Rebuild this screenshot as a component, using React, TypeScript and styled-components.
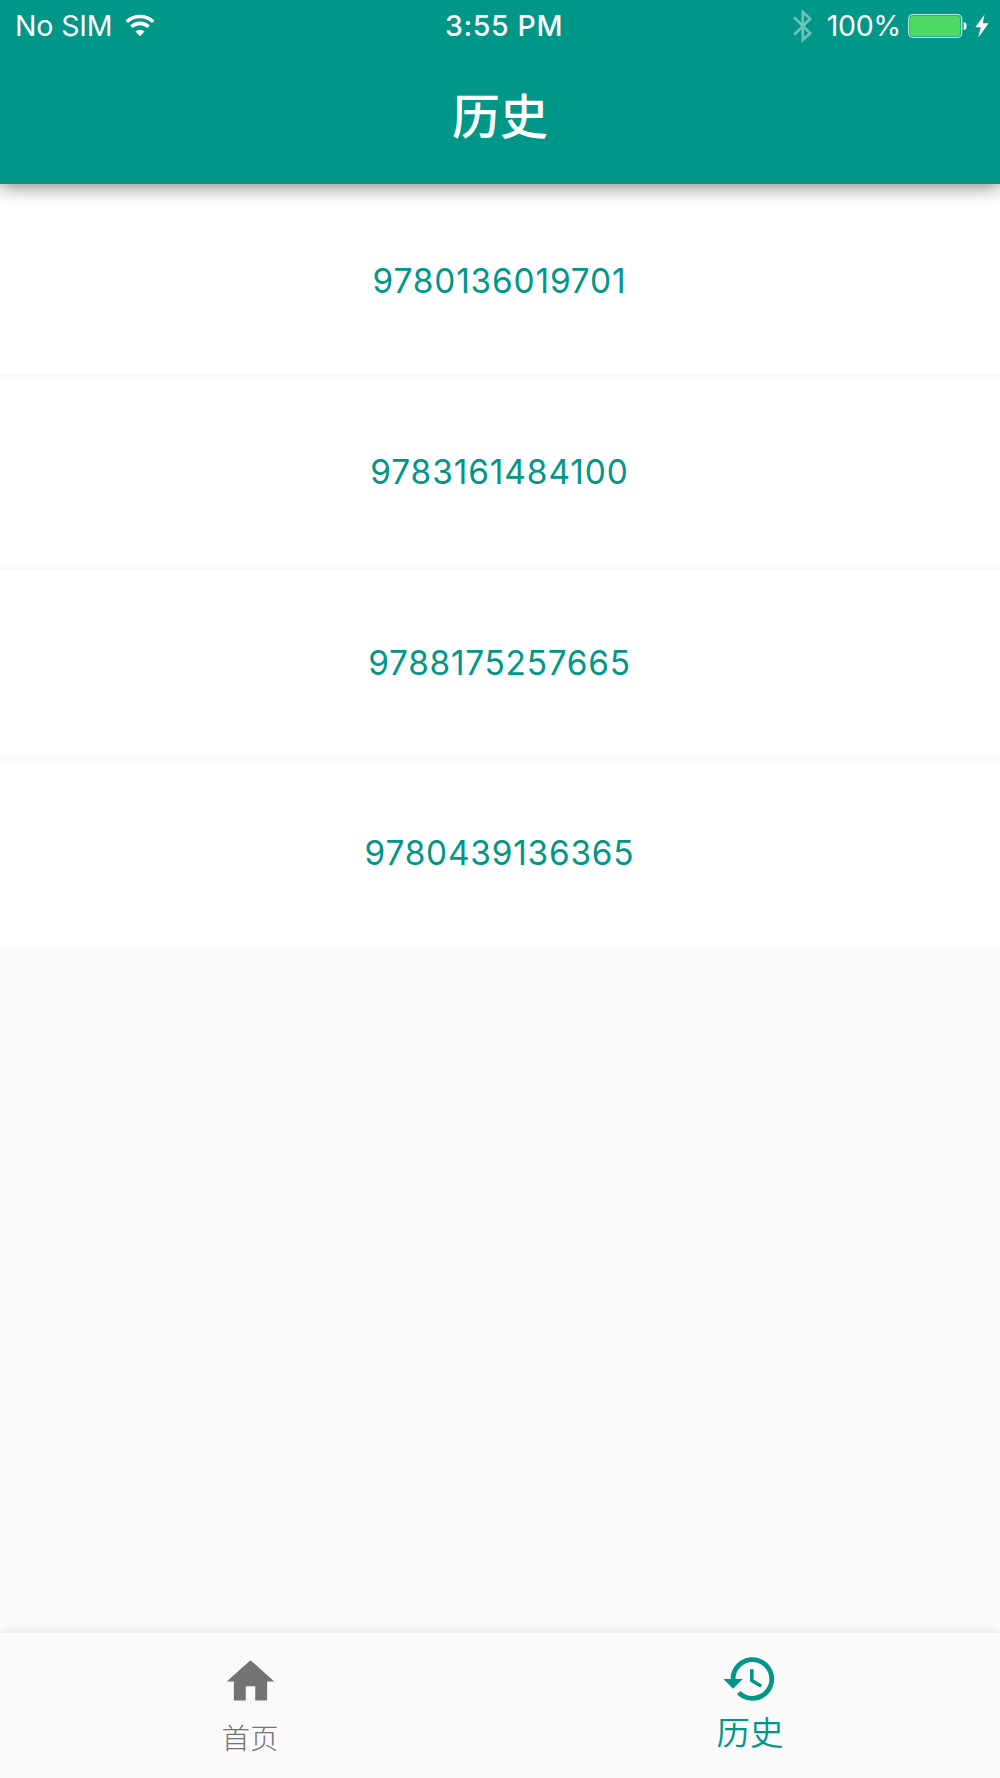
import React from 'react';
import styled, { createGlobalStyle } from 'styled-components';

const teal = '#009688';

const GlobalStyle = createGlobalStyle`
  * { box-sizing: border-box; }
  body { margin: 0; background: #fafafa; }
`;

const Screen = styled.div`
  display: flex;
  flex-direction: column;
  width: 1000px;
  height: 1778px;
  overflow: hidden;
  background: #fafafa;
  font-family: Inter, 'Noto Sans CJK SC', sans-serif;
`;

const Header = styled.header`
  flex: none;
  height: 183.7px;
  background: ${teal};
  color: #fff;
  box-shadow: 0 5.3px 16px rgba(0, 0, 0, 0.38);
  z-index: 1;
`;

const StatusBar = styled.div`
  display: grid;
  grid-template-columns: 1fr auto 1fr;
  align-items: center;
  height: 50px;
  padding: 0 11px 0 15px;
`;

const StatusGroup = styled.div<{ $end?: boolean }>`
  display: flex;
  align-items: center;
  justify-content: ${p => (p.$end ? 'flex-end' : 'flex-start')};
`;

const StatusText = styled.span<{ $weight?: number; $tracking?: number; $left?: number }>`
  margin-left: ${p => p.$left ?? 0}px;
  padding-top: 1px;
  font-size: 28.5px;
  line-height: 50px;
  font-weight: ${p => p.$weight ?? 370};
  letter-spacing: ${p => p.$tracking ?? 0}px;
  white-space: pre;
`;

const Glyph = styled.svg<{ $left?: number }>`
  display: block;
  flex: none;
  margin-left: ${p => p.$left ?? 0}px;
`;

const Title = styled.h1`
  margin: 0;
  padding-top: 27px;
  text-align: center;
  font: 500 48px/72px 'Noto Sans CJK SC', sans-serif;
`;

const List = styled.main`
  flex: 1;
  display: flex;
  flex-direction: column;
  gap: 4.8px;
  padding-top: 4.8px;
`;

const Row = styled.div<{ $tracking: number }>`
  flex: none;
  display: flex;
  align-items: center;
  justify-content: center;
  height: 186px;
  padding: 0 1px 1px 0;
  background: #fff;
  color: ${teal};
  font-size: 33.4px;
  font-weight: 380;
  letter-spacing: ${p => p.$tracking}px;
`;

const TabBar = styled.nav`
  flex: none;
  display: grid;
  grid-template-columns: 1fr 1fr;
  height: 145.3px;
  background: #fafafa;
  box-shadow: 0 -1px 8px rgba(0, 0, 0, 0.09);
`;

const Tab = styled.div<{ $active?: boolean }>`
  display: flex;
  flex-direction: column;
  align-items: center;
  padding-top: ${p => (p.$active ? 17 : 20)}px;
  color: ${p => (p.$active ? teal : '#737373')};
`;

const TabLabel = styled.span<{ $active?: boolean }>`
  font-family: 'Noto Sans CJK SC', sans-serif;
  font-weight: ${p => (p.$active ? 350 : 300)};
  font-size: ${p => (p.$active ? 33.5 : 28.5)}px;
  line-height: 48px;
  margin-top: ${p => (p.$active ? -1 : 3)}px;
`;

const isbns = [
  { code: '9780136019701', tracking: 0.85 },
  { code: '9783161484100', tracking: 0.92 },
  { code: '9788175257665', tracking: 0.72 },
  { code: '9780439136365', tracking: 0.78 },
];

const WifiIcon = () => (
  <Glyph $left={13} width="30" height="24" viewBox="0 0 30 24" fill="none" stroke="#fff" strokeWidth="3.6">
    <path d="M1.7 7.800a19.2 19.2 0 0 1 26.6 0" />
    <path d="M6.4 12.800a12.4 12.4 0 0 1 17.2 0" />
    <path d="M15 22.300l-4.5-4.7a6.5 6.5 0 0 1 9 0z" fill="#fff" stroke="none" />
  </Glyph>
);

const BluetoothIcon = () => (
  <Glyph width="20" height="34" viewBox="0 0 20 34" fill="none" stroke="#fff" strokeWidth="2.7" opacity="0.42">
    <path d="M1.200 8.200L17.200 24.200L9.800 31V3L17.200 9.800L1.200 25.800" />
  </Glyph>
);

const BatteryIcon = () => (
  <Glyph $left={7} width="60" height="24" viewBox="0 0 60 24">
    <rect x="0.7" y="0.7" width="53" height="22.6" rx="4" fill="none" stroke="#b9e5df" strokeWidth="1.3" />
    <rect x="2" y="2" width="50.4" height="20" rx="2.6" fill="#4cd964" />
    <path d="M55.700 8c4 1 4 7.200 0 8.200z" fill="#fff" />
  </Glyph>
);

const BoltIcon = () => (
  <Glyph $left={7} width="14" height="24" viewBox="0 0 14 24" fill="#fff">
    <path d="M9.500 0.500L0.300 13.300H5.800L3.200 23.500L13.700 9.300H7.800z" />
  </Glyph>
);

export default function App() {
  return (
    <Screen>
      <GlobalStyle />
      <Header>
        <StatusBar>
          <StatusGroup>
            <StatusText $tracking={-0.15}>No SIM</StatusText>
            <WifiIcon />
          </StatusGroup>
          <StatusText $weight={550} $tracking={0.65} $left={4}>3:55 PM</StatusText>
          <StatusGroup $end>
            <BluetoothIcon />
            <StatusText $left={14} $tracking={-0.3}>100%</StatusText>
            <BatteryIcon />
            <BoltIcon />
          </StatusGroup>
        </StatusBar>
        <Title>历史</Title>
      </Header>
      <List>
        {isbns.map(item => (
          <Row key={item.code} $tracking={item.tracking}>{item.code}</Row>
        ))}
      </List>
      <TabBar>
        <Tab>
          <Glyph width="57" height="57" viewBox="0 0 24 24" fill="currentColor">
            <path d="M10 20v-6h4v6h5v-8h3L12 3 2 12h3v8z" />
          </Glyph>
          <TabLabel>首页</TabLabel>
        </Tab>
        <Tab $active>
          <Glyph width="58" height="58" viewBox="0 0 24 24" fill="currentColor">
            <path d="M13 3c-4.970 0-9 4.030-9 9H1l3.890 3.890.07.14L9 12H6c0-3.870 3.130-7 7-7s7 3.130 7 7-3.130 7-7 7c-1.930 0-3.680-.79-4.940-2.060l-1.420 1.420C8.270 19.990 10.510 21 13 21c4.970 0 9-4.030 9-9s-4.030-9-9-9zm-1 5v5l4.280 2.540.72-1.210-3.500-2.080V8H12z" />
          </Glyph>
          <TabLabel $active>历史</TabLabel>
        </Tab>
      </TabBar>
    </Screen>
  );
}
